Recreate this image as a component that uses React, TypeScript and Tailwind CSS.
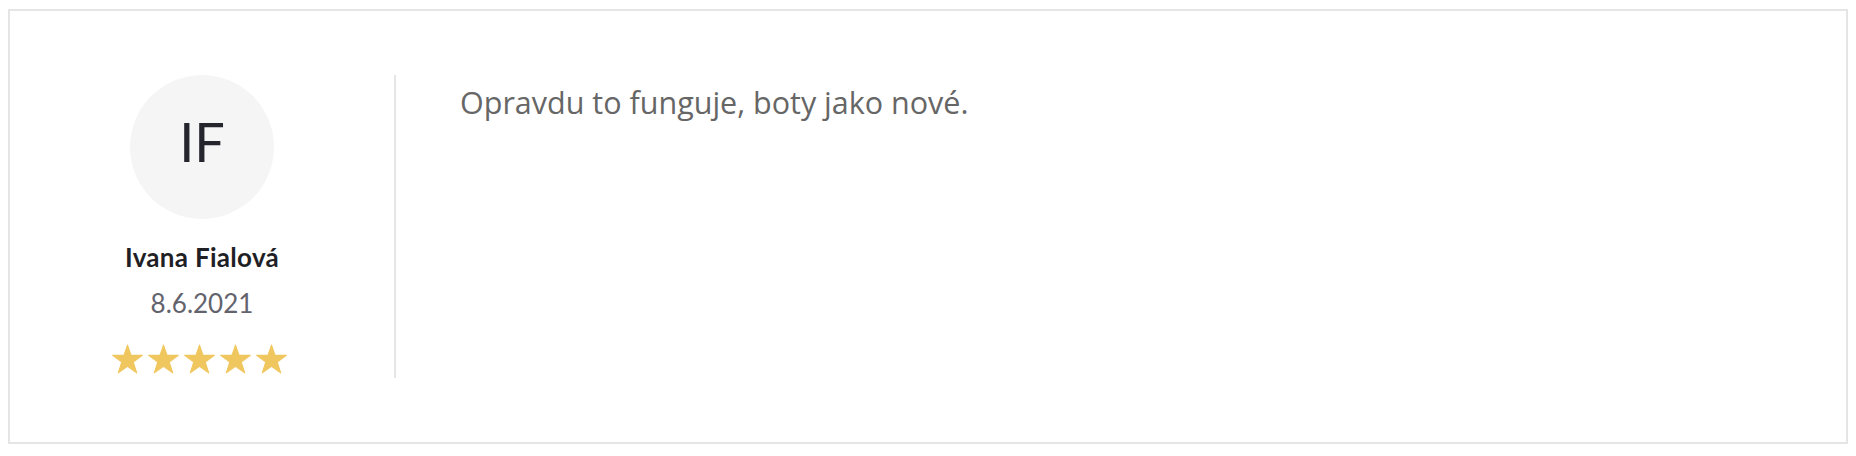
const StarIcon = () => (
  <svg viewBox="0 0 34 32" className="w-[31px] h-[30px]" fill="#f0c75e" stroke="#f0c75e" strokeWidth="1.2" strokeLinejoin="round">
    <path d="M17 0.8L20.9 12 33.3 12 23.3 19.4 27.1 31.2 17 24 6.9 31.2 10.7 19.4 0.7 12 13.1 12z" />
  </svg>
);

export default function App() {
  return (
    <div className="w-[1856px] h-[456px] bg-white pt-[9px] pl-[8px]">
      <div className="w-[1840px] h-[435px] border-2 border-[#e5e5e5] flex py-[64px]">
        <div className="w-[384px] flex flex-col items-center">
          <div className="w-[144px] h-[144px] rounded-full bg-[#f5f5f5] flex items-center justify-center pb-[10px]">
            <span className="font-['Lato',sans-serif] text-[54px] leading-none text-[#25252d]">IF</span>
          </div>
          <div className="mt-[22px] font-['Lato',sans-serif] font-bold text-[26px] leading-[32px] tracking-[0.3px] text-[#1f1f26]">
            Ivana Fialová
          </div>
          <div className="mt-[14px] font-['Lato',sans-serif] text-[26px] leading-[32px] text-[#63636e]">
            8.6.2021
          </div>
          <div className="mt-[25px] mr-[5px] flex gap-[5px]">
            {[0, 1, 2, 3, 4].map((i) => (
              <StarIcon key={i} />
            ))}
          </div>
        </div>
        <div className="w-[2px] self-stretch bg-[#e5e5e5]" />
        <div className="pl-[64px] pt-[7px]">
          <p className="font-['Open_Sans',sans-serif] text-[30.5px] leading-[40px] text-[#666666]">
            Opravdu to funguje, boty jako nové.
          </p>
        </div>
      </div>
    </div>
  );
}
